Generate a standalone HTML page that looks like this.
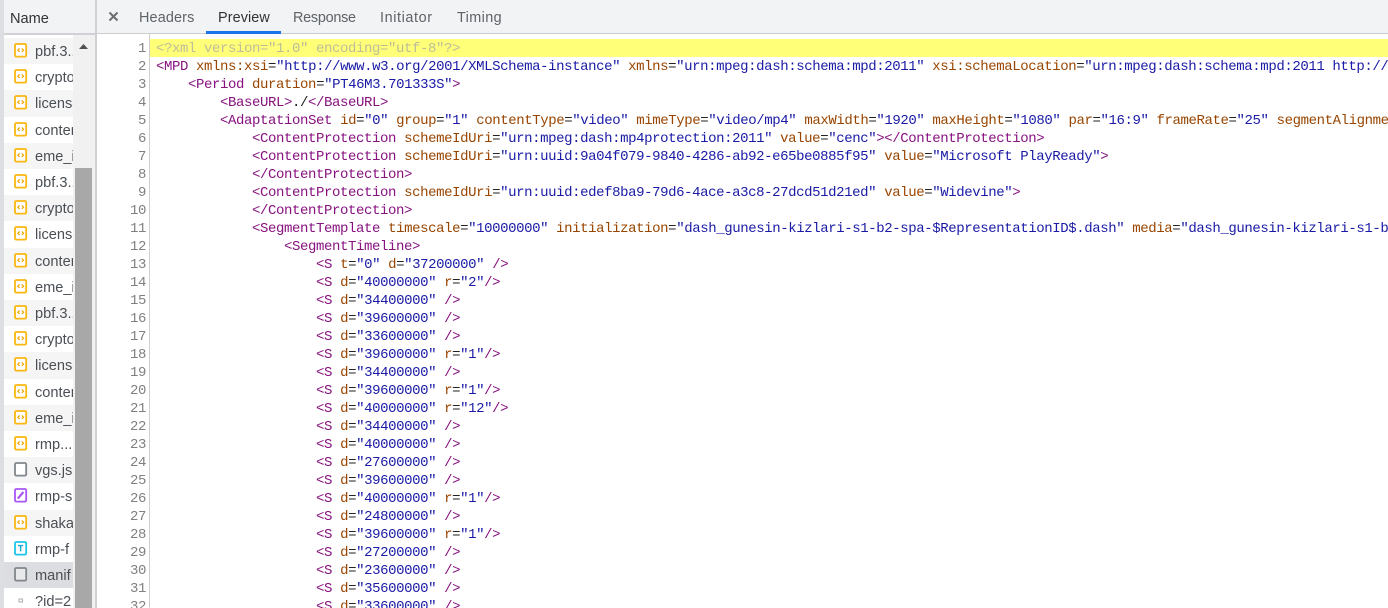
<!DOCTYPE html>
<html><head><meta charset="utf-8">
<style>
html,body{margin:0;padding:0;width:1388px;height:608px;overflow:hidden;background:#fff;font-family:"Liberation Sans",sans-serif}
.a{position:absolute}
#root{position:relative;width:1388px;height:608px;overflow:hidden}
.t{position:absolute;top:9px;font-size:14.4px;line-height:18px;color:#5f6368;white-space:pre}
.r{position:absolute;left:4px;width:69px;height:26.2px;overflow:hidden;background:#fff}
.r.o{background:#f5f5f5}
.r.s{background:#dcdde0}
.r span{position:absolute;left:31px;top:5px;font-size:14.6px;line-height:18px;color:#4a4f55;white-space:pre}
.r svg{position:absolute;left:10px;top:5px}
#code{position:absolute;left:0;top:40px;width:1388px;font-family:"Liberation Mono",monospace;font-size:14px;letter-spacing:-0.4px;line-height:18px}
.l{position:absolute;left:156px;height:18px;white-space:pre;color:#222}
.n{position:absolute;left:100px;width:46px;text-align:right;height:18px;color:#808080;white-space:pre}
.g{color:#bdbd9a}.k{color:#881280}.b{color:#994500}.v{color:#1a1aa6}
</style></head><body><div id="root">
<svg width="0" height="0" style="position:absolute"><defs>
<g id="x"><rect x="1" y="1" width="11.2" height="12.6" rx="1.3" fill="#fff" stroke="#f9b70f" stroke-width="1.8"/><path d="M5.6 5.4L3.8 7.2L5.6 9M7.8 5.4L9.6 7.2L7.8 9" fill="none" stroke="#eda600" stroke-width="1.2"/></g>
<g id="d"><rect x="1" y="1" width="11.2" height="12.6" rx="1.3" fill="#fff" stroke="#80868b" stroke-width="1.8"/></g>
</defs></svg>
<div class="a" style="left:0;top:0;width:4px;height:608px;background:#dcdee1"></div>
<div class="a" style="left:4px;top:0;width:91px;height:34px;background:#f1f3f4"></div>
<div class="a" style="left:4px;top:33px;width:91px;height:2px;background:#cfd1d5"></div>
<div class="a" style="left:10px;top:10px;font-size:14.6px;line-height:18px;color:#333">Name</div>
<div class="a" style="left:95px;top:0;width:2px;height:608px;background:#cfd1d5"></div>
<div class="a" style="left:97px;top:0;width:1291px;height:33px;background:#f1f3f4"></div>
<div class="a" style="left:97px;top:33px;width:1291px;height:1px;background:#cbcdd1"></div>
<svg class="a" style="left:108px;top:11px" width="11" height="11" viewBox="0 0 11 11"><path d="M1.5 1.5L9.5 9.5M9.5 1.5L1.5 9.5" stroke="#6e6e6e" stroke-width="2"/></svg>
<div class="t" style="left:139px;letter-spacing:.15px">Headers</div>
<div class="t" style="left:218px;color:#333;letter-spacing:.1px">Preview</div>
<div class="t" style="left:293px;letter-spacing:-.25px">Response</div>
<div class="t" style="left:380px;letter-spacing:.6px">Initiator</div>
<div class="t" style="left:457px;letter-spacing:.4px">Timing</div>
<div class="a" style="left:206px;top:31px;width:75px;height:3px;background:#1a73e8"></div>

<div class="r o" style="top:38px"><svg width="14" height="16"><use href="#x"/></svg><span>pbf.3..</span></div>
<div class="r" style="top:64.2px"><svg width="14" height="16"><use href="#x"/></svg><span>crypto</span></div>
<div class="r o" style="top:90.4px"><svg width="14" height="16"><use href="#x"/></svg><span>license</span></div>
<div class="r" style="top:116.6px"><svg width="14" height="16"><use href="#x"/></svg><span>content</span></div>
<div class="r o" style="top:142.8px"><svg width="14" height="16"><use href="#x"/></svg><span>eme_i</span></div>
<div class="r" style="top:169px"><svg width="14" height="16"><use href="#x"/></svg><span>pbf.3..</span></div>
<div class="r o" style="top:195.2px"><svg width="14" height="16"><use href="#x"/></svg><span>crypto</span></div>
<div class="r" style="top:221.4px"><svg width="14" height="16"><use href="#x"/></svg><span>license</span></div>
<div class="r o" style="top:247.6px"><svg width="14" height="16"><use href="#x"/></svg><span>content</span></div>
<div class="r" style="top:273.8px"><svg width="14" height="16"><use href="#x"/></svg><span>eme_i</span></div>
<div class="r o" style="top:300px"><svg width="14" height="16"><use href="#x"/></svg><span>pbf.3..</span></div>
<div class="r" style="top:326.2px"><svg width="14" height="16"><use href="#x"/></svg><span>crypto</span></div>
<div class="r o" style="top:352.4px"><svg width="14" height="16"><use href="#x"/></svg><span>license</span></div>
<div class="r" style="top:378.6px"><svg width="14" height="16"><use href="#x"/></svg><span>content</span></div>
<div class="r o" style="top:404.8px"><svg width="14" height="16"><use href="#x"/></svg><span>eme_i</span></div>
<div class="r" style="top:431px"><svg width="14" height="16"><use href="#x"/></svg><span>rmp...</span></div>
<div class="r o" style="top:457.2px"><svg width="14" height="16"><use href="#d"/></svg><span>vgs.js.</span></div>
<div class="r" style="top:483.4px"><svg width="14" height="16"><rect x="1" y="1" width="11.2" height="12.6" rx="1.3" fill="#fff" stroke="#a855f7" stroke-width="1.8"/><path d="M3.8 10.6L9.4 4" stroke="#a855f7" stroke-width="2.2"/></svg><span>rmp-s</span></div>
<div class="r o" style="top:509.6px"><svg width="14" height="16"><use href="#x"/></svg><span>shaka</span></div>
<div class="r" style="top:535.8px"><svg width="14" height="16"><rect x="1" y="1" width="11.2" height="12.6" rx="1.3" fill="#fff" stroke="#1cc6e8" stroke-width="1.8"/><path d="M4 4.6H9.2M6.6 4.6V10.4" fill="none" stroke="#12a8d0" stroke-width="1.4"/></svg><span>rmp-f</span></div>
<div class="r s" style="top:562px"><svg width="14" height="16"><rect x="1" y="1" width="11.2" height="12.6" rx="1.3" fill="#e8e9eb" stroke="#80868b" stroke-width="1.8"/></svg><span>manif</span></div>
<div class="r" style="top:588.2px"><svg width="14" height="16"><rect x="5" y="6" width="3.5" height="3" fill="#fff" stroke="#a9adb2" stroke-width="1"/></svg><span>?id=2</span></div>

<div class="a" style="left:73px;top:35px;width:22px;height:573px;background:#f1f1f1"></div>
<div class="a" style="left:75px;top:168px;width:17px;height:440px;background:#a8a8a8"></div>
<svg class="a" style="left:78px;top:43px" width="11" height="7"><path d="M1 6L5.5 1L10 6Z" fill="#505050"/></svg>

<div class="a" style="left:149px;top:34px;width:1px;height:574px;background:#cfcfcf"></div>
<div class="a" style="left:150px;top:39px;width:1238px;height:18px;background:#ffff78"></div>

<div id="code">
<div class="n" style="top:0">1</div><div class="l g" style="top:0">&lt;?xml version="1.0" encoding="utf-8"?&gt;</div>
<div class="n" style="top:18px">2</div><div class="l" style="top:18px"><span class="k">&lt;MPD</span> <span class="b">xmlns:xsi</span>=<span class="v">"http://www.w3.org/2001/XMLSchema-instance"</span> <span class="b">xmlns</span>=<span class="v">"urn:mpeg:dash:schema:mpd:2011"</span> <span class="b">xsi:schemaLocation</span>=<span class="v">"urn:mpeg:dash:schema:mpd:2011 http://</span></div>
<div class="n" style="top:36px">3</div><div class="l" style="top:36px">    <span class="k">&lt;Period</span> <span class="b">duration</span>=<span class="v">"PT46M3.701333S"</span><span class="k">&gt;</span></div>
<div class="n" style="top:54px">4</div><div class="l" style="top:54px">        <span class="k">&lt;BaseURL&gt;</span>./<span class="k">&lt;/BaseURL&gt;</span></div>
<div class="n" style="top:72px">5</div><div class="l" style="top:72px">        <span class="k">&lt;AdaptationSet</span> <span class="b">id</span>=<span class="v">"0"</span> <span class="b">group</span>=<span class="v">"1"</span> <span class="b">contentType</span>=<span class="v">"video"</span> <span class="b">mimeType</span>=<span class="v">"video/mp4"</span> <span class="b">maxWidth</span>=<span class="v">"1920"</span> <span class="b">maxHeight</span>=<span class="v">"1080"</span> <span class="b">par</span>=<span class="v">"16:9"</span> <span class="b">frameRate</span>=<span class="v">"25"</span> <span class="b">segmentAlignme</span></div>
<div class="n" style="top:90px">6</div><div class="l" style="top:90px">            <span class="k">&lt;ContentProtection</span> <span class="b">schemeIdUri</span>=<span class="v">"urn:mpeg:dash:mp4protection:2011"</span> <span class="b">value</span>=<span class="v">"cenc"</span><span class="k">&gt;&lt;/ContentProtection&gt;</span></div>
<div class="n" style="top:108px">7</div><div class="l" style="top:108px">            <span class="k">&lt;ContentProtection</span> <span class="b">schemeIdUri</span>=<span class="v">"urn:uuid:9a04f079-9840-4286-ab92-e65be0885f95"</span> <span class="b">value</span>=<span class="v">"Microsoft PlayReady"</span><span class="k">&gt;</span></div>
<div class="n" style="top:126px">8</div><div class="l" style="top:126px">            <span class="k">&lt;/ContentProtection&gt;</span></div>
<div class="n" style="top:144px">9</div><div class="l" style="top:144px">            <span class="k">&lt;ContentProtection</span> <span class="b">schemeIdUri</span>=<span class="v">"urn:uuid:edef8ba9-79d6-4ace-a3c8-27dcd51d21ed"</span> <span class="b">value</span>=<span class="v">"Widevine"</span><span class="k">&gt;</span></div>
<div class="n" style="top:162px">10</div><div class="l" style="top:162px">            <span class="k">&lt;/ContentProtection&gt;</span></div>
<div class="n" style="top:180px">11</div><div class="l" style="top:180px">            <span class="k">&lt;SegmentTemplate</span> <span class="b">timescale</span>=<span class="v">"10000000"</span> <span class="b">initialization</span>=<span class="v">"dash_gunesin-kizlari-s1-b2-spa-$RepresentationID$.dash"</span> <span class="b">media</span>=<span class="v">"dash_gunesin-kizlari-s1-b</span></div>
<div class="n" style="top:198px">12</div><div class="l" style="top:198px">                <span class="k">&lt;SegmentTimeline&gt;</span></div>
<div class="n" style="top:216px">13</div><div class="l" style="top:216px">                    <span class="k">&lt;S</span> <span class="b">t</span>=<span class="v">"0"</span> <span class="b">d</span>=<span class="v">"37200000"</span> <span class="k">/&gt;</span></div>
<div class="n" style="top:234px">14</div><div class="l" style="top:234px">                    <span class="k">&lt;S</span> <span class="b">d</span>=<span class="v">"40000000"</span> <span class="b">r</span>=<span class="v">"2"</span><span class="k">/&gt;</span></div>
<div class="n" style="top:252px">15</div><div class="l" style="top:252px">                    <span class="k">&lt;S</span> <span class="b">d</span>=<span class="v">"34400000"</span> <span class="k">/&gt;</span></div>
<div class="n" style="top:270px">16</div><div class="l" style="top:270px">                    <span class="k">&lt;S</span> <span class="b">d</span>=<span class="v">"39600000"</span> <span class="k">/&gt;</span></div>
<div class="n" style="top:288px">17</div><div class="l" style="top:288px">                    <span class="k">&lt;S</span> <span class="b">d</span>=<span class="v">"33600000"</span> <span class="k">/&gt;</span></div>
<div class="n" style="top:306px">18</div><div class="l" style="top:306px">                    <span class="k">&lt;S</span> <span class="b">d</span>=<span class="v">"39600000"</span> <span class="b">r</span>=<span class="v">"1"</span><span class="k">/&gt;</span></div>
<div class="n" style="top:324px">19</div><div class="l" style="top:324px">                    <span class="k">&lt;S</span> <span class="b">d</span>=<span class="v">"34400000"</span> <span class="k">/&gt;</span></div>
<div class="n" style="top:342px">20</div><div class="l" style="top:342px">                    <span class="k">&lt;S</span> <span class="b">d</span>=<span class="v">"39600000"</span> <span class="b">r</span>=<span class="v">"1"</span><span class="k">/&gt;</span></div>
<div class="n" style="top:360px">21</div><div class="l" style="top:360px">                    <span class="k">&lt;S</span> <span class="b">d</span>=<span class="v">"40000000"</span> <span class="b">r</span>=<span class="v">"12"</span><span class="k">/&gt;</span></div>
<div class="n" style="top:378px">22</div><div class="l" style="top:378px">                    <span class="k">&lt;S</span> <span class="b">d</span>=<span class="v">"34400000"</span> <span class="k">/&gt;</span></div>
<div class="n" style="top:396px">23</div><div class="l" style="top:396px">                    <span class="k">&lt;S</span> <span class="b">d</span>=<span class="v">"40000000"</span> <span class="k">/&gt;</span></div>
<div class="n" style="top:414px">24</div><div class="l" style="top:414px">                    <span class="k">&lt;S</span> <span class="b">d</span>=<span class="v">"27600000"</span> <span class="k">/&gt;</span></div>
<div class="n" style="top:432px">25</div><div class="l" style="top:432px">                    <span class="k">&lt;S</span> <span class="b">d</span>=<span class="v">"39600000"</span> <span class="k">/&gt;</span></div>
<div class="n" style="top:450px">26</div><div class="l" style="top:450px">                    <span class="k">&lt;S</span> <span class="b">d</span>=<span class="v">"40000000"</span> <span class="b">r</span>=<span class="v">"1"</span><span class="k">/&gt;</span></div>
<div class="n" style="top:468px">27</div><div class="l" style="top:468px">                    <span class="k">&lt;S</span> <span class="b">d</span>=<span class="v">"24800000"</span> <span class="k">/&gt;</span></div>
<div class="n" style="top:486px">28</div><div class="l" style="top:486px">                    <span class="k">&lt;S</span> <span class="b">d</span>=<span class="v">"39600000"</span> <span class="b">r</span>=<span class="v">"1"</span><span class="k">/&gt;</span></div>
<div class="n" style="top:504px">29</div><div class="l" style="top:504px">                    <span class="k">&lt;S</span> <span class="b">d</span>=<span class="v">"27200000"</span> <span class="k">/&gt;</span></div>
<div class="n" style="top:522px">30</div><div class="l" style="top:522px">                    <span class="k">&lt;S</span> <span class="b">d</span>=<span class="v">"23600000"</span> <span class="k">/&gt;</span></div>
<div class="n" style="top:540px">31</div><div class="l" style="top:540px">                    <span class="k">&lt;S</span> <span class="b">d</span>=<span class="v">"35600000"</span> <span class="k">/&gt;</span></div>
<div class="n" style="top:558px">32</div><div class="l" style="top:558px">                    <span class="k">&lt;S</span> <span class="b">d</span>=<span class="v">"33600000"</span> <span class="k">/&gt;</span></div>
</div>
</div></body></html>
